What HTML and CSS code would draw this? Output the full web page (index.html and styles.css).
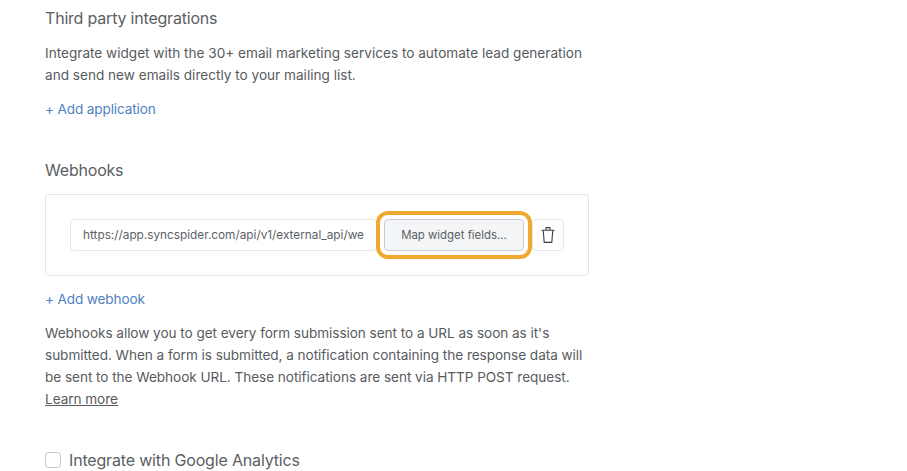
FILE: index.html
```html
<!DOCTYPE html>
<html lang="en">
<head>
<meta charset="utf-8">
<title>Integrations</title>
<link rel="stylesheet" href="styles.css">
</head>
<body>
<main class="page">
  <section class="integrations">
    <h2 class="title">Third party integrations</h2>
    <p class="text">Integrate widget with the 30+ email marketing services to automate lead generation<br>and send new emails directly to your mailing list.</p>
    <a class="add add-app" href="#">+ Add application</a>
  </section>
  <section class="webhooks">
    <h2 class="title">Webhooks</h2>
    <div class="card">
      <div class="url">https://app.syncspider.com/api/v1/external_api/we</div>
      <button class="map" type="button">Map widget fields...</button>
      <button class="trash" type="button" aria-label="Delete">
        <svg width="14" height="18" viewBox="0 0 14 18" fill="none" stroke="#3a3e44" stroke-width="1.1" stroke-linecap="round" stroke-linejoin="round"><path d="M1 4.2h12M5 4.2V1.6h4v2.6M2.2 4.2l1 12.2h7.6l1-12.2"/></svg>
      </button>
    </div>
    <a class="add add-hook" href="#">+ Add webhook</a>
    <p class="text hook-text">Webhooks allow you to get every form submission sent to a URL as soon as it's<br>submitted. When a form is submitted, a notification containing the response data will<br>be sent to the Webhook URL. These notifications are sent via HTTP POST request.<br><a class="learn" href="#">Learn more</a></p>
  </section>
  <label class="check">
    <span class="box"></span>
    <span class="check-label">Integrate with Google Analytics</span>
  </label>
</main>
</body>
</html>
```
FILE: styles.css
```css
* { box-sizing: border-box; }
html, body { margin: 0; padding: 0; background: #fff; }
body { height: 471px; overflow: hidden; font-family: Inter, "Open Sans", sans-serif; color: #4a4e54; }
.page { width: 589px; padding: 8px 0 0 45px; display: flex; flex-direction: column; }
.title { margin: 0; font-size: 16px; line-height: 21px; font-weight: 400; letter-spacing: -0.2px; color: #5b5e63; }
.text { margin: 13px 0 0; font-size: 13.6px; line-height: 22.3px; color: #575b60; }
.add { display: block; font-size: 13.6px; line-height: 20px; letter-spacing: -0.14px; color: #4f82c1; text-decoration: none; }
.add-app { margin-top: 12px; }
.webhooks { margin-top: 41px; }
.card { margin-top: 13px; height: 82px; border: 1px solid #e3e6ea; border-radius: 4px; padding: 0 24px; display: flex; align-items: center; }
.url { width: 307px; height: 32px; flex: none; border: 1px solid #e6e8eb; border-radius: 4px; padding: 0 0 0 12px; font-size: 11.8px; line-height: 30px; color: #5c6065; white-space: nowrap; overflow: hidden; }
.map { flex: none; margin-left: 7px; width: 140px; height: 32px; background: #f4f5f7; border: 1px solid #c9ced6; border-radius: 4px; font: inherit; font-size: 11.4px; color: #5c6065; padding: 0; outline: 4px solid #f0a92e; outline-offset: 4px; }
.trash { flex: none; margin-left: 8px; width: 32px; height: 32px; background: #fff; border: 1px solid #e6e8eb; border-radius: 4px; padding: 0; display: flex; align-items: center; justify-content: center; }
.add-hook { margin-top: 13px; }
.hook-text { margin-top: 13px; letter-spacing: -0.05px; }
.learn { color: #575b60; }
.check { margin-top: 39px; display: flex; align-items: center; gap: 8px; }
.box { width: 16px; height: 16px; border: 1px solid #c5c9cf; border-radius: 4px; background: #fff; }
.check-label { font-size: 16px; line-height: 21px; letter-spacing: -0.17px; color: #5b5e63; }
```
